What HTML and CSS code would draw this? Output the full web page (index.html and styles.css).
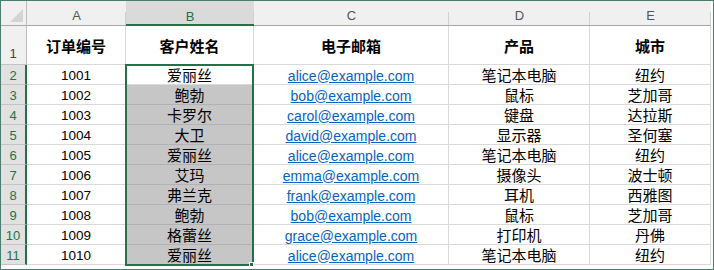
FILE: index.html
```html
<!DOCTYPE html>
<html lang="zh-CN">
<head>
<meta charset="utf-8">
<title>Sheet</title>
<link rel="stylesheet" href="styles.css">
</head>
<body>
<div class="frame">
  <div class="sheet">
    <div class="corner"><svg class="corner-tri" width="14" height="14" viewBox="0 0 14 14"><polygon points="13,0 13,13 0,13" fill="#d4d4d4"/></svg></div>
    <div class="colhead">A</div>
    <div class="colhead colhead-sel">B</div>
    <div class="colhead">C</div>
    <div class="colhead">D</div>
    <div class="colhead">E</div>

    <div class="rowhead rowhead-first">1</div>
    <div class="cell title">订单编号</div>
    <div class="cell title">客户姓名</div>
    <div class="cell title">电子邮箱</div>
    <div class="cell title">产品</div>
    <div class="cell title">城市</div>

    <div class="rowhead">2</div>
    <div class="cell num">1001</div>
    <div class="cell cjk">爱丽丝</div>
    <div class="cell"><a class="mail" href="#">alice@example.com</a></div>
    <div class="cell cjk">笔记本电脑</div>
    <div class="cell cjk">纽约</div>

    <div class="rowhead">3</div>
    <div class="cell num">1002</div>
    <div class="cell cjk sel">鲍勃</div>
    <div class="cell"><a class="mail" href="#">bob@example.com</a></div>
    <div class="cell cjk">鼠标</div>
    <div class="cell cjk">芝加哥</div>

    <div class="rowhead">4</div>
    <div class="cell num">1003</div>
    <div class="cell cjk sel">卡罗尔</div>
    <div class="cell"><a class="mail" href="#">carol@example.com</a></div>
    <div class="cell cjk">键盘</div>
    <div class="cell cjk">达拉斯</div>

    <div class="rowhead">5</div>
    <div class="cell num">1004</div>
    <div class="cell cjk sel">大卫</div>
    <div class="cell"><a class="mail" href="#">david@example.com</a></div>
    <div class="cell cjk">显示器</div>
    <div class="cell cjk">圣何塞</div>

    <div class="rowhead">6</div>
    <div class="cell num">1005</div>
    <div class="cell cjk sel">爱丽丝</div>
    <div class="cell"><a class="mail" href="#">alice@example.com</a></div>
    <div class="cell cjk">笔记本电脑</div>
    <div class="cell cjk">纽约</div>

    <div class="rowhead">7</div>
    <div class="cell num">1006</div>
    <div class="cell cjk sel">艾玛</div>
    <div class="cell"><a class="mail" href="#">emma@example.com</a></div>
    <div class="cell cjk">摄像头</div>
    <div class="cell cjk">波士顿</div>

    <div class="rowhead">8</div>
    <div class="cell num">1007</div>
    <div class="cell cjk sel">弗兰克</div>
    <div class="cell"><a class="mail" href="#">frank@example.com</a></div>
    <div class="cell cjk">耳机</div>
    <div class="cell cjk">西雅图</div>

    <div class="rowhead">9</div>
    <div class="cell num">1008</div>
    <div class="cell cjk sel">鲍勃</div>
    <div class="cell"><a class="mail" href="#">bob@example.com</a></div>
    <div class="cell cjk">鼠标</div>
    <div class="cell cjk">芝加哥</div>

    <div class="rowhead">10</div>
    <div class="cell num">1009</div>
    <div class="cell cjk sel">格蕾丝</div>
    <div class="cell"><a class="mail" href="#">grace@example.com</a></div>
    <div class="cell cjk">打印机</div>
    <div class="cell cjk">丹佛</div>

    <div class="rowhead">11</div>
    <div class="cell num">1010</div>
    <div class="cell cjk sel">爱丽丝</div>
    <div class="cell"><a class="mail" href="#">alice@example.com</a></div>
    <div class="cell cjk">笔记本电脑</div>
    <div class="cell cjk">纽约</div>

    <div class="selection"></div>
    <div class="fill-handle"></div>
  </div>
</div>
</body>
</html>
```

FILE: styles.css
```css
html, body {
  margin: 0;
  padding: 0;
  background: #ffffff;
}

.frame {
  width: 714px;
  height: 270px;
  box-sizing: border-box;
  border: 1px solid #4a7c6f;
  background: #ffffff;
  overflow: hidden;
}

.sheet {
  position: relative;
  display: grid;
  grid-template-columns: 26px 99px 128px 195px 141px 121px;
  grid-template-rows: 25px 39px repeat(10, 20px);
  font-family: "Liberation Sans", "Noto Sans CJK SC", sans-serif;
}

.sheet > div {
  box-sizing: border-box;
}

.corner {
  background: #f0f0f0;
  border-right: 1px solid #bdbdbd;
  border-bottom: 1px solid #a8a8a8;
  display: flex;
  align-items: flex-end;
  justify-content: flex-end;
  padding: 0 2px 2px 0;
}

.corner-tri {
  display: block;
}

.colhead {
  position: relative;
  background: #f0f0f0;
  border-bottom: 1px solid #a8a8a8;
  display: flex;
  align-items: center;
  justify-content: center;
  padding-top: 5px;
  font-size: 13px;
  color: #555555;
}

.colhead::after {
  content: "";
  position: absolute;
  right: 0;
  top: 11px;
  bottom: 0;
  width: 1px;
  background: #d0d0d0;
}

.colhead-sel {
  background: #dadada;
  color: #217346;
  border-bottom: 2px solid #217346;
  padding-top: 7px;
}

.rowhead {
  background: #e1e1e1;
  border-right: 2px solid #217346;
  border-bottom: 1px solid #c4c4c4;
  display: flex;
  align-items: center;
  justify-content: center;
  padding-top: 2px;
  font-size: 13px;
  color: #217346;
}

.rowhead-first {
  background: #f0f0f0;
  color: #444444;
  border-right: 1px solid #bdbdbd;
  align-items: flex-end;
  padding: 0 1px 3px 0;
}

.cell {
  border-right: 1px solid #dadada;
  border-bottom: 1px solid #dadada;
  display: flex;
  align-items: center;
  justify-content: center;
  padding-top: 2px;
  color: #000000;
  white-space: nowrap;
}

.title {
  font-family: "Noto Sans CJK SC", sans-serif;
  font-weight: 700;
  font-size: 15px;
  padding-top: 0;
}

.cjk {
  font-family: "Noto Sans CJK SC", sans-serif;
  font-size: 15px;
  padding-top: 0;
}

.num {
  font-size: 13.5px;
}

.sel {
  background: #c6c6c6;
  border-bottom-color: #b2b2b2;
}

.mail {
  font-family: "Liberation Sans", sans-serif;
  font-size: 14px;
  color: #0563c1;
  text-decoration: underline;
}

.selection {
  position: absolute;
  left: 124px;
  top: 63px;
  width: 129px;
  height: 202px;
  border: 2px solid #217346;
  pointer-events: none;
}

.fill-handle {
  position: absolute;
  left: 248px;
  top: 261px;
  width: 5px;
  height: 5px;
  background: #217346;
  border: 1px solid #ffffff;
}
```
